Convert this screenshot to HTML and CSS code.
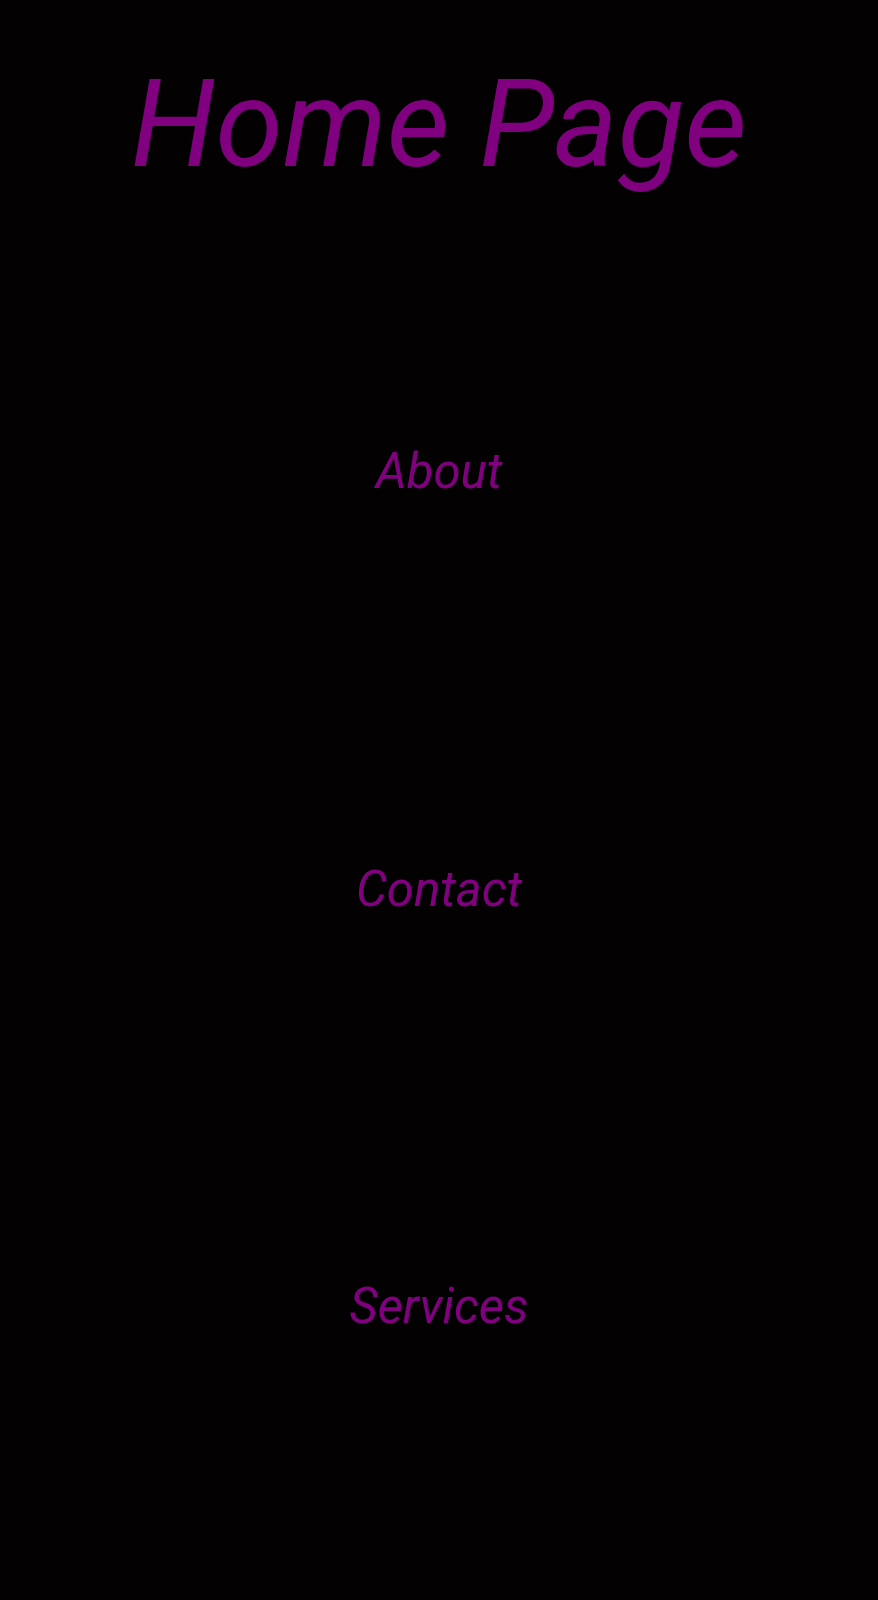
FILE: index.html
```html
<!DOCTYPE html>
<html lang="en">
<head>
<meta charset="utf-8">
<title>Home Page</title>
<link rel="stylesheet" href="styles.css">
</head>
<body>
<header class="header">
  <h1 class="title">Home Page</h1>
</header>
<nav class="nav">
  <a class="nav-link" href="#about">About</a>
  <a class="nav-link" href="#contact">Contact</a>
  <a class="nav-link" href="#services">Services</a>
</nav>
</body>
</html>
```
FILE: styles.css
```css
html, body {
  margin: 0;
  padding: 0;
  background: #030102;
}
body {
  min-height: 1600px;
  font-family: Roboto, "Noto Sans", sans-serif;
  font-style: italic;
  color: #800080;
}
.header {
  padding-top: 64px;
}
.title {
  margin: 0;
  font-size: 122px;
  font-weight: 400;
  line-height: 1;
  text-align: center;
}
.nav {
  display: flex;
  flex-direction: column;
  align-items: center;
  gap: 368.5px;
  margin-top: 261px;
}
.nav-link {
  font-size: 49px;
  line-height: 1;
  color: #800080;
  text-decoration: none;
}
```
